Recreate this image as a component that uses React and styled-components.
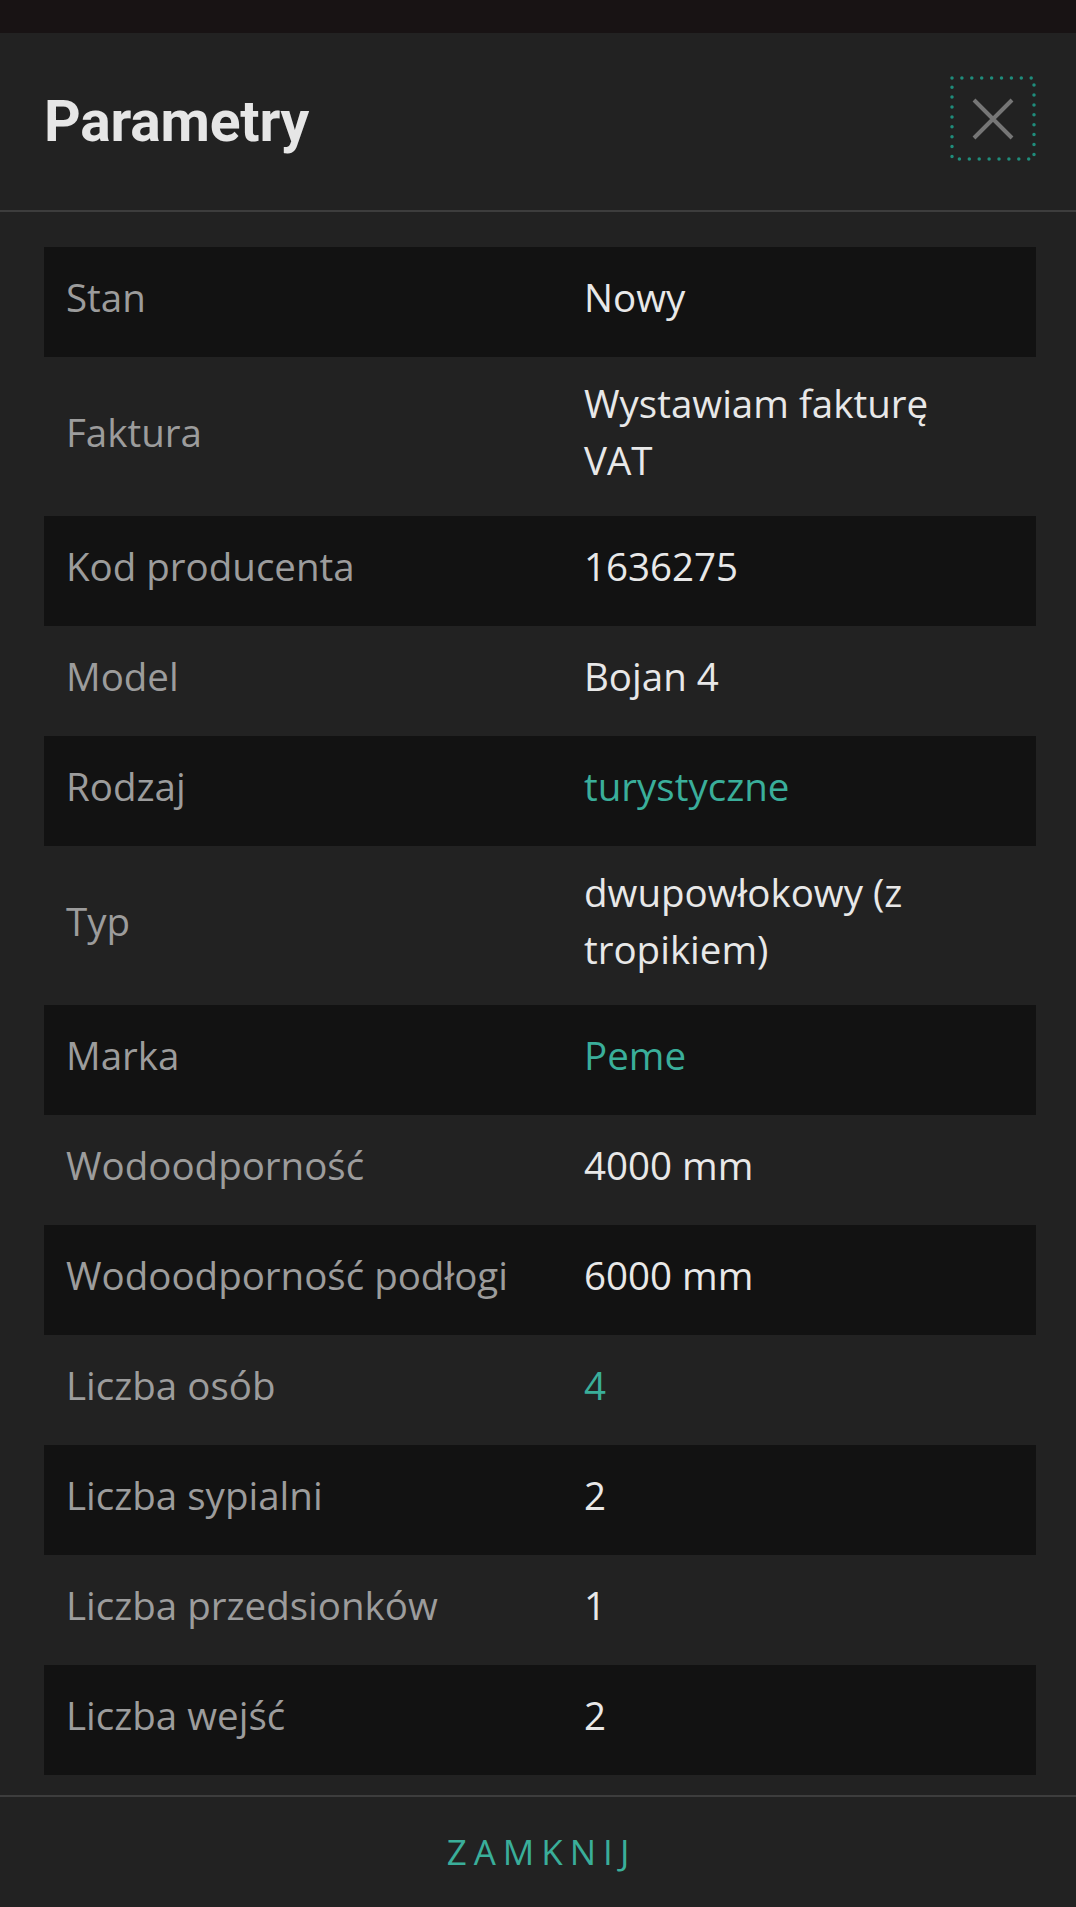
import React from "react";
import styled, { createGlobalStyle } from "styled-components";

const Global = createGlobalStyle`
  html, body { margin: 0; padding: 0; background: #222222; }
  body { font-family: "Open Sans", "Noto Sans", sans-serif; }
  * { box-sizing: border-box; }
`;

const Page = styled.div`
  width: 1076px;
  min-height: 1907px;
  background: #222222;
  display: flex;
  flex-direction: column;
`;

const StatusBar = styled.div`
  height: 33px;
  background: #181314;
`;

const Header = styled.header`
  height: 179px;
  display: flex;
  align-items: center;
  justify-content: space-between;
  padding: 0 40px 0 44px;
  border-bottom: 2px solid #3d3d3d;
`;

const Title = styled.h1`
  margin: 0;
  font-family: Roboto, "Liberation Sans", sans-serif;
  font-weight: 700;
  font-size: 57px;
  line-height: 1;
  color: #e6e6e6;
  letter-spacing: -0.2px;
`;

const CloseButton = styled.button`
  position: relative;
  width: 86px;
  height: 85px;
  display: flex;
  align-items: center;
  justify-content: center;
  background: transparent;
  border: none;
  padding: 0;
  margin-top: -6px;
  cursor: pointer;
`;

const FocusRing = styled.svg`
  position: absolute;
  inset: 0;
`;

const Body = styled.main`
  padding: 35px 40px 18px 44px;
`;

const Row = styled.div`
  display: grid;
  grid-template-columns: 1fr 1fr;
  align-items: center;
  min-height: 110px;
  padding: 18px 0 27px;
  background: ${(p) => (p.$dark ? "#121212" : "transparent")};
  font-size: 38.5px;
  line-height: 57px;
`;

const Label = styled.div`
  padding: 0 22px;
  color: #9c9c9c;
`;

const Value = styled.div`
  padding: 0 44px;
  color: ${(p) => (p.$link ? "#3aae9a" : "#e8e8e8")};
`;

const Footer = styled.footer`
  margin-top: auto;
  height: 112px;
  border-top: 2px solid #3d3d3d;
  display: flex;
  align-items: center;
  justify-content: center;
`;

const FooterButton = styled.button`
  background: transparent;
  border: none;
  font-family: "Open Sans", sans-serif;
  font-size: 35px;
  letter-spacing: 7px;
  padding: 0 0 0 7px;
  color: #3aae9a;
  cursor: pointer;
  margin-top: -2px;
`;

const rows = [
  ["Stan", "Nowy"],
  ["Faktura", "Wystawiam fakturę VAT"],
  ["Kod producenta", "1636275"],
  ["Model", "Bojan 4"],
  ["Rodzaj", "turystyczne", true],
  ["Typ", "dwupowłokowy (z tropikiem)"],
  ["Marka", "Peme", true],
  ["Wodoodporność", "4000 mm"],
  ["Wodoodporność podłogi", "6000 mm"],
  ["Liczba osób", "4", true],
  ["Liczba sypialni", "2"],
  ["Liczba przedsionków", "1"],
  ["Liczba wejść", "2"],
];

export default function App() {
  return (
    <Page>
      <Global />
      <StatusBar />
      <Header>
        <Title>Parametry</Title>
        <CloseButton aria-label="Zamknij">
          <FocusRing width="86" height="85" viewBox="0 0 86 85">
            <rect
              x="2"
              y="2"
              width="82"
              height="81"
              fill="none"
              stroke="#1f8c7b"
              strokeWidth="3.5"
              strokeLinecap="round"
              strokeDasharray="0 9.9"
            />
          </FocusRing>
          <svg width="42" height="42" viewBox="0 0 42 42">
            <path d="M2 2 L40 40 M40 2 L2 40" stroke="#767676" strokeWidth="4" />
          </svg>
        </CloseButton>
      </Header>
      <Body>
        {rows.map(([label, value, link], i) => (
          <Row key={label} $dark={i % 2 === 0}>
            <Label>{label}</Label>
            <Value $link={link}>{value}</Value>
          </Row>
        ))}
      </Body>
      <Footer>
        <FooterButton>ZAMKNIJ</FooterButton>
      </Footer>
    </Page>
  );
}
